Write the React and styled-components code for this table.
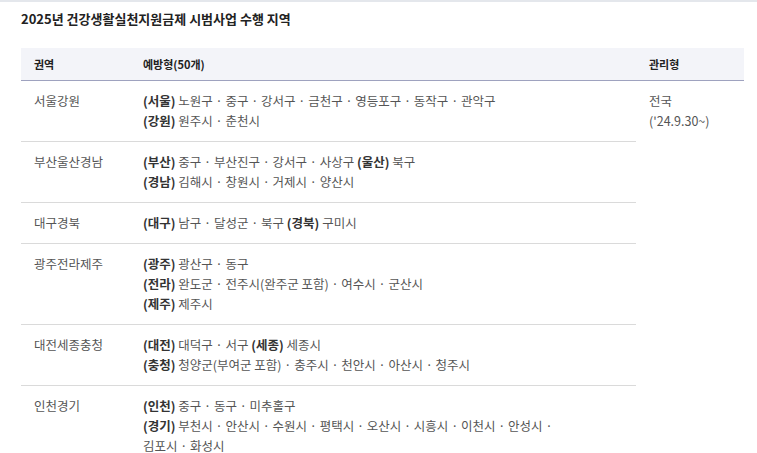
import React from "react";
import styled, { createGlobalStyle } from "styled-components";

const GlobalStyle = createGlobalStyle`
  body {
    margin: 0;
    background: #fff;
    font-family: "Noto Sans CJK KR", "Noto Sans", sans-serif;
  }
`;

const Page = styled.div`
  border-top: 2px solid #e4e7ec;
  padding: 8px 13px 0 21px;
`;

const Title = styled.h3`
  margin: 0;
  font-size: 13px;
  font-weight: 700;
  color: #222;
  line-height: 18px;
`;

const Table = styled.table`
  width: 723px;
  margin-top: 20px;
  border-collapse: collapse;
  table-layout: fixed;
  font-size: 12.5px;
  color: #555;
  word-break: keep-all;
`;

const Th = styled.th`
  background: #f3f4f9;
  text-align: left;
  font-weight: 700;
  color: #222;
  font-size: 11px;
  height: 32px;
  padding: 0 13px;
  border-bottom: 1px solid #9ea2bf;
`;

const Td = styled.td`
  vertical-align: top;
  padding: 10px ${(p) => (p.$wide ? "50px" : "13px")} 10px 13px;
  line-height: 20px;
  border-bottom: ${(p) => (p.$last ? "none" : "1px solid #dadada")};
`;

const Side = styled.td`
  vertical-align: top;
  padding: 10px 13px;
  line-height: 20px;
`;

const Tag = styled.b`
  color: #333;
  font-weight: 700;
`;

const Line = styled.div``;

const rows = [
  {
    region: "서울강원",
    lines: [
      [["서울", "노원구 · 중구 · 강서구 · 금천구 · 영등포구 · 동작구 · 관악구"]],
      [["강원", "원주시 · 춘천시"]],
    ],
  },
  {
    region: "부산울산경남",
    lines: [
      [
        ["부산", "중구 · 부산진구 · 강서구 · 사상구"],
        ["울산", "북구"],
      ],
      [["경남", "김해시 · 창원시 · 거제시 · 양산시"]],
    ],
  },
  {
    region: "대구경북",
    lines: [
      [
        ["대구", "남구 · 달성군 · 북구"],
        ["경북", "구미시"],
      ],
    ],
  },
  {
    region: "광주전라제주",
    lines: [
      [["광주", "광산구 · 동구"]],
      [["전라", "완도군 · 전주시(완주군 포함) · 여수시 · 군산시"]],
      [["제주", "제주시"]],
    ],
  },
  {
    region: "대전세종충청",
    lines: [
      [
        ["대전", "대덕구 · 서구"],
        ["세종", "세종시"],
      ],
      [["충청", "청양군(부여군 포함) · 충주시 · 천안시 · 아산시 · 청주시"]],
    ],
  },
  {
    region: "인천경기",
    lines: [
      [["인천", "중구 · 동구 · 미추홀구"]],
      [
        [
          "경기",
          "부천시 · 안산시 · 수원시 · 평택시 · 오산시 · 시흥시 · 이천시 · 안성시 · 김포시 · 화성시",
        ],
      ],
    ],
  },
];

const App = () => {
  return (
    <>
      <GlobalStyle />
      <Page>
        <Title>2025년 건강생활실천지원금제 시범사업 수행 지역</Title>
        <Table>
          <colgroup>
            <col style={{ width: 109 }} />
            <col style={{ width: 506 }} />
            <col style={{ width: 108 }} />
          </colgroup>
          <thead>
            <tr>
              <Th>권역</Th>
              <Th>예방형(50개)</Th>
              <Th>관리형</Th>
            </tr>
          </thead>
          <tbody>
            {rows.map((r, i) => {
              const last = i === rows.length - 1;
              return (
                <tr key={r.region}>
                  <Td $last={last}>{r.region}</Td>
                  <Td $last={last} $wide>
                    {r.lines.map((line, j) => (
                      <Line key={j}>
                        {line.map(([tag, text], k) => (
                          <React.Fragment key={k}>
                            {k > 0 && " "}
                            <Tag>({tag})</Tag> {text}
                          </React.Fragment>
                        ))}
                      </Line>
                    ))}
                  </Td>
                  {i === 0 && (
                    <Side rowSpan={rows.length}>
                      전국
                      <br />
                      ('24.9.30~)
                    </Side>
                  )}
                </tr>
              );
            })}
          </tbody>
        </Table>
      </Page>
    </>
  );
};

export default App;
